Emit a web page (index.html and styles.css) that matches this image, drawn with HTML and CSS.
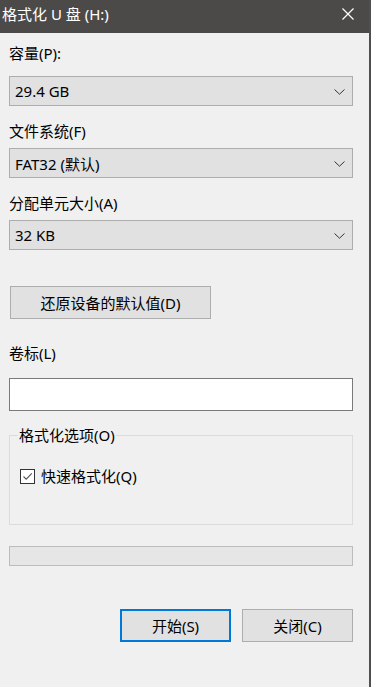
FILE: index.html
```
<!DOCTYPE html>
<html lang="zh-CN"><head>
<meta charset="utf-8">
<meta name="viewport" content="width=device-width, initial-scale=1.0">
<title>格式化 U 盘 (H:)</title>
<link rel="stylesheet" href="styles.css">
</head><body>

<div class="window">
<div class="title-bar">
<div class="title">格式化 U 盘 (H:)</div>
<div class="close"><svg width="12" height="12" viewBox="0 0 12 12"><path d="M0.5 0.5 L11.5 11.5 M11.5 0.5 L0.5 11.5" stroke="#ffffff" stroke-width="1.2" fill="none"/></svg></div>
</div>

<div class="content">
<div class="label first">容量(P):</div>
<div class="combo"><span>29.4 GB</span><svg width="11" height="6" viewBox="0 0 11 6"><path d="M0.5 0.5 L5.5 5.2 L10.5 0.5" stroke="#333" stroke-width="1" fill="none"/></svg></div>

<div class="label">文件系统(F)</div>
<div class="combo"><span>FAT32 (默认)</span><svg width="11" height="6" viewBox="0 0 11 6"><path d="M0.5 0.5 L5.5 5.2 L10.5 0.5" stroke="#333" stroke-width="1" fill="none"/></svg></div>

<div class="label">分配单元大小(A)</div>
<div class="combo"><span>32 KB</span><svg width="11" height="6" viewBox="0 0 11 6"><path d="M0.5 0.5 L5.5 5.2 L10.5 0.5" stroke="#333" stroke-width="1" fill="none"/></svg></div>

<div class="button restore">还原设备的默认值(D)</div>

<div class="label volume">卷标(L)</div>
<div class="text-input"></div>

<fieldset class="options">
<legend>格式化选项(O)</legend>
<div class="check-row">
<div class="checkbox"><svg width="11" height="11" viewBox="0 0 11 11"><path d="M1.5 5.5 L4.2 8.2 L9.8 2.4" stroke="#555" stroke-width="1.1" fill="none"/></svg></div>
<span>快速格式化(Q)</span>
</div>
</fieldset>

<div class="progress"></div>

<div class="actions">
<div class="button default">开始(S)</div>
<div class="button">关闭(C)</div>
</div>
</div>
</div>

</body></html>
```

FILE: styles.css
```
html, body {
	margin : 0 ;
	padding : 0 ;
	}
body {
	font-family : "Noto Sans", "Noto Sans CJK SC", sans-serif ;
	font-size : 15px ;
	color : #000000 ;
	background : #f0f0f0 ;
	}
.window {
	width : 371px ;
	height : 687px ;
	box-sizing : border-box ;
	border-right : 2px solid #4f4f4f ;
	background : #f0f0f0 ;
	display : flex ;
	flex-direction : column ;
	}
.title-bar {
	height : 33px ;
	flex : none ;
	background : #4b4a48 ;
	display : flex ;
	justify-content : space-between ;
	}
.title {
	color : #ffffff ;
	padding : 4px 0 0 2px ;
	line-height : 20px ;
	}
.close {
	padding : 8px 15px 0 0 ;
	}
.close svg {
	display : block ;
	}
.content {
	padding : 0 16px 0 9px ;
	display : flex ;
	flex-direction : column ;
	}
.label {
	line-height : 20px ;
	margin-top : 15px ;
	}
.label.first {
	margin-top : 10px ;
	margin-bottom : 6px ;
	}
.combo {
	height : 30px ;
	box-sizing : border-box ;
	margin-top : 7px ;
	border : 1px solid #adadad ;
	background : #e1e1e1 ;
	display : flex ;
	align-items : center ;
	justify-content : space-between ;
	padding : 0 7px 0 5px ;
	}
.combo svg {
	display : block ;
	margin-top : 2px ;
	}
.button {
	height : 33px ;
	box-sizing : border-box ;
	border : 1px solid #adadad ;
	background : #e1e1e1 ;
	display : flex ;
	align-items : center ;
	justify-content : center ;
	}
.button.restore {
	width : 201px ;
	margin : 36px 0 0 1px ;
	}
.label.volume {
	margin-top : 24px ;
	}
.text-input {
	height : 33px ;
	box-sizing : border-box ;
	margin-top : 15px ;
	border : 1px solid #7a7a7a ;
	background : #ffffff ;
	}
fieldset.options {
	margin : 14px 0 0 0 ;
	padding : 0 0 0 10px ;
	border : 1px solid #dcdcdc ;
	height : 100px ;
	box-sizing : border-box ;
	min-width : 0 ;
	}
fieldset.options legend {
	padding : 0 1px ;
	margin-left : -2px ;
	line-height : 20px ;
	}
.check-row {
	display : flex ;
	align-items : center ;
	gap : 6px ;
	margin-top : 21px ;
	line-height : 20px ;
	}
.checkbox {
	width : 15px ;
	height : 15px ;
	box-sizing : border-box ;
	border : 1px solid #333333 ;
	background : #ffffff ;
	display : flex ;
	align-items : center ;
	justify-content : center ;
	}
.checkbox svg {
	display : block ;
	}
.progress {
	height : 20px ;
	box-sizing : border-box ;
	margin-top : 21px ;
	border : 1px solid #bcbcbc ;
	background : #e6e6e6 ;
	}
.actions {
	display : flex ;
	justify-content : flex-end ;
	gap : 11px ;
	margin-top : 43px ;
	}
.actions .button {
	width : 111px ;
	}
.actions .button.default {
	border : 2px solid #0078d7 ;
	}
```
